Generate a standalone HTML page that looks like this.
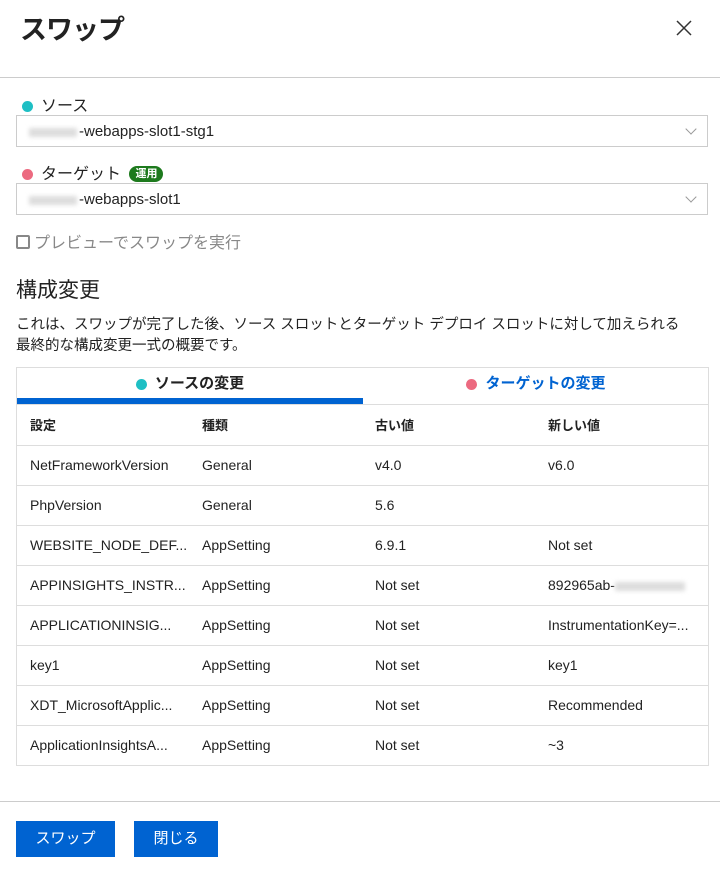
<!DOCTYPE html>
<html><head><meta charset="utf-8"><style>
*{box-sizing:border-box;margin:0;padding:0}
body{width:720px;height:870px;background:#fff;font-family:"Liberation Sans","Noto Sans CJK JP",sans-serif;color:#222;position:relative;overflow:hidden}
.a{position:absolute}
.dot{display:inline-block;width:11px;height:11px;border-radius:50%;vertical-align:middle}
.sel{position:absolute;left:16px;width:692px;height:32px;border:1px solid #ccc;font-size:15px;line-height:30px;padding-left:12px}
.blur{display:inline-block;width:48px;height:9px;background:#ddd;filter:blur(2px);vertical-align:middle;margin-right:2px}
.chev{position:absolute;right:12px;top:9px;width:8px;height:8px;border-right:1px solid #999;border-bottom:1px solid #999;transform:rotate(45deg)}
table{border-collapse:collapse;width:691px;font-size:14px;table-layout:fixed}
td{height:40px;border-bottom:1px solid #ddd;padding-left:13px;white-space:nowrap;overflow:hidden}
.btn{position:absolute;top:821px;height:36px;background:#0063d1;color:#fff;font-size:15px;line-height:36px;text-align:center}
</style></head><body>
<div class="a" style="left:20px;top:8px;font-size:27px;font-weight:bold;letter-spacing:-1px">スワップ</div>
<svg class="a" style="left:675px;top:19px" width="18" height="18"><path d="M2 2L16 16M16 2L2 16" stroke="#333" stroke-width="1.5"/></svg>
<div class="a" style="left:0;top:77px;width:720px;height:1px;background:#ccc"></div>
<div class="a" style="left:22px;top:92px;font-size:16px"><span class="dot" style="background:#1ebfc4;margin-right:8px"></span>ソース</div>
<div class="sel" style="top:115px;line-height:31px"><span class="blur"></span>-webapps-slot1-stg1<div class="chev"></div></div>
<div class="a" style="left:22px;top:160px;font-size:16px"><span class="dot" style="background:#ec6a80;margin-right:8px"></span>ターゲット <span style="display:inline-block;background:#1d7a1d;color:#fff;font-size:11px;font-weight:bold;border-radius:9px;padding:0 6px;line-height:16px;vertical-align:2px;margin-left:4px">運用</span></div>
<div class="sel" style="top:183px;line-height:31px"><span class="blur"></span>-webapps-slot1<div class="chev"></div></div>
<div class="a" style="left:16px;top:229px;font-size:16px;color:#888"><span style="display:inline-block;width:14px;height:14px;border:2px solid #888;border-radius:2px;vertical-align:-1px;margin-right:4px"></span>プレビューでスワップを実行</div>
<div class="a" style="left:16px;top:274px;font-size:21px">構成変更</div>
<div class="a" style="left:16px;top:315px;font-size:14.5px;line-height:21px;width:692px">これは、スワップが完了した後、ソース スロットとターゲット デプロイ スロットに対して加えられる<br>最終的な構成変更一式の概要です。</div>
<div class="a" style="left:16px;top:367px;width:693px;height:399px;border:1px solid #ddd">
<div style="height:37px;position:relative;border-bottom:1px solid #ddd">
<div class="a" style="left:0;top:0;width:346px;text-align:center;line-height:32px;font-size:15px;font-weight:bold"><span class="dot" style="background:#1ebfc4;margin-right:8px"></span>ソースの変更</div>
<div class="a" style="left:0;top:30px;width:346px;height:6px;background:#0063d1"></div>
<div class="a" style="left:346px;top:0;width:346px;text-align:center;line-height:32px;font-size:15px;font-weight:bold;color:#0063d1"><span class="dot" style="background:#ec6a80;margin-right:8px"></span>ターゲットの変更</div>
</div>
<table>
<colgroup><col style="width:172px"><col style="width:173px"><col style="width:173px"><col style="width:173px"></colgroup>
<tr style="font-size:13px;font-weight:bold"><td>設定</td><td>種類</td><td>古い値</td><td>新しい値</td></tr>
<tr><td>NetFrameworkVersion</td><td>General</td><td>v4.0</td><td>v6.0</td></tr>
<tr><td>PhpVersion</td><td>General</td><td>5.6</td><td></td></tr>
<tr><td>WEBSITE_NODE_DEF...</td><td>AppSetting</td><td>6.9.1</td><td>Not set</td></tr>
<tr><td>APPINSIGHTS_INSTR...</td><td>AppSetting</td><td>Not set</td><td>892965ab-<span class="blur" style="width:70px"></span></td></tr>
<tr><td>APPLICATIONINSIG...</td><td>AppSetting</td><td>Not set</td><td>InstrumentationKey=...</td></tr>
<tr><td>key1</td><td>AppSetting</td><td>Not set</td><td>key1</td></tr>
<tr><td>XDT_MicrosoftApplic...</td><td>AppSetting</td><td>Not set</td><td>Recommended</td></tr>
<tr><td>ApplicationInsightsA...</td><td>AppSetting</td><td>Not set</td><td>~3</td></tr>
</table>
</div>
<div class="a" style="left:0;top:801px;width:720px;height:1px;background:#ccc"></div>
<div class="btn" style="left:16px;width:99px">スワップ</div>
<div class="btn" style="left:134px;width:84px">閉じる</div>
</body></html>
